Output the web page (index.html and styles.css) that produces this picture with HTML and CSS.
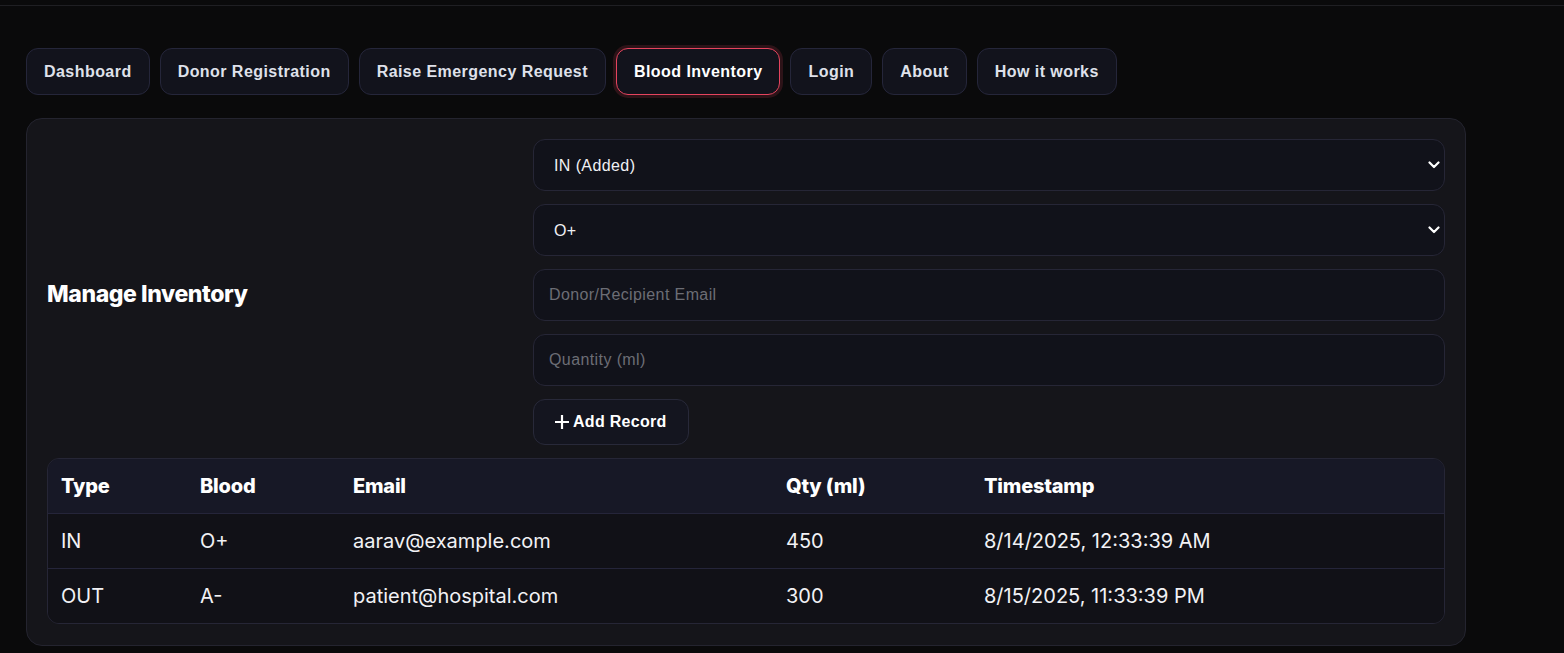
FILE: index.html
```html
<!DOCTYPE html>
<html lang="en">
<head>
<meta charset="utf-8">
<title>Blood Inventory</title>
<link rel="stylesheet" href="styles.css">
</head>
<body>
<div class="topbar"></div>
<main class="page">
  <nav class="tabs">
    <button class="tab">Dashboard</button>
    <button class="tab">Donor Registration</button>
    <button class="tab">Raise Emergency Request</button>
    <button class="tab active">Blood Inventory</button>
    <button class="tab">Login</button>
    <button class="tab">About</button>
    <button class="tab">How it works</button>
  </nav>

  <section class="card">
    <div class="manage">
      <h2 class="title">Manage Inventory</h2>
      <form class="form">
        <div class="select-wrap">
          <select class="field select">
            <option>IN (Added)</option>
            <option>OUT (Used)</option>
          </select>
          <svg class="chev" width="12" height="8" viewBox="0 0 12 8"><path d="M1.5 1.5 6 6l4.5-4.5" fill="none" stroke="#fff" stroke-width="2.2" stroke-linecap="round" stroke-linejoin="round"/></svg>
        </div>
        <div class="select-wrap">
          <select class="field select">
            <option>O+</option>
            <option>A-</option>
          </select>
          <svg class="chev" width="12" height="8" viewBox="0 0 12 8"><path d="M1.5 1.5 6 6l4.5-4.5" fill="none" stroke="#fff" stroke-width="2.2" stroke-linecap="round" stroke-linejoin="round"/></svg>
        </div>
        <input class="field input" type="text" placeholder="Donor/Recipient Email">
        <input class="field input" type="text" placeholder="Quantity (ml)">
        <div><button type="button" class="add"><svg width="14" height="14" viewBox="0 0 14 14"><path d="M7 1v12M1 7h12" stroke="#fff" stroke-width="2.2" stroke-linecap="square"/></svg>Add Record</button></div>
      </form>
    </div>

    <div class="table-wrap">
      <table class="table">
        <colgroup>
          <col class="c1"><col class="c2"><col class="c3"><col class="c4"><col class="c5">
        </colgroup>
        <thead>
          <tr><th>Type</th><th>Blood</th><th>Email</th><th>Qty (ml)</th><th>Timestamp</th></tr>
        </thead>
        <tbody>
          <tr><td>IN</td><td>O+</td><td>aarav@example.com</td><td>450</td><td>8/14/2025, 12:33:39 AM</td></tr>
          <tr><td>OUT</td><td>A-</td><td>patient@hospital.com</td><td>300</td><td>8/15/2025, 11:33:39 PM</td></tr>
        </tbody>
      </table>
    </div>
  </section>
</main>
</body>
</html>
```

FILE: styles.css
```css
* { box-sizing: border-box; }

html, body {
  margin: 0;
  background: #0a0a0b;
  color: #e8e8ee;
  font-family: "Liberation Sans", Arial, sans-serif;
}

.topbar {
  height: 6px;
  border-bottom: 1px solid #1f1f23;
}

.page {
  padding: 42px 26px 0;
}

.tabs {
  display: flex;
  gap: 10px;
}

.tab {
  height: 47px;
  padding: 0 17px;
  background: #12131c;
  border: 1px solid #25263a;
  border-radius: 12px;
  color: #dfe1ea;
  font-family: "Liberation Sans", Arial, sans-serif;
  font-weight: 700;
  font-size: 16px;
  letter-spacing: 0.45px;
}

.tab.active {
  color: #fff;
  border-color: #e5445e;
  box-shadow: 0 0 0 3px rgba(229, 68, 94, 0.16);
}

.card {
  margin-top: 23px;
  width: 1440px;
  background: #15151a;
  border: 1px solid #24242f;
  border-radius: 16px;
  padding: 20px 20px 21px;
}

.manage {
  display: grid;
  grid-template-columns: 1fr 2fr;
  column-gap: 30px;
  align-items: center;
}

.title {
  margin: 0;
  padding-top: 3px;
  font-family: Inter, "Noto Sans", sans-serif;
  font-weight: 800;
  font-size: 23px;
  color: #fff;
  letter-spacing: -0.4px;
}

.form {
  display: flex;
  flex-direction: column;
  gap: 13px;
}

.field {
  display: block;
  width: 100%;
  height: 52px;
  background: #11121a;
  border: 1px solid #262636;
  border-radius: 12px;
  color: #f0f0f4;
  font-family: "Liberation Sans", Arial, sans-serif;
  font-size: 16px;
  letter-spacing: 0.4px;
  outline: none;
}

.select-wrap {
  position: relative;
}

.select {
  appearance: none;
  -webkit-appearance: none;
  padding: 0 20px;
}

.chev {
  position: absolute;
  right: 5px;
  top: 22px;
  width: 12px;
  height: 8px;
}

.input {
  padding: 0 15px;
}

.input::placeholder {
  color: #6c6d75;
}

.add {
  display: inline-flex;
  align-items: center;
  gap: 4px;
  height: 46px;
  padding: 0 21px 0 21px;
  background: #14151f;
  border: 1px solid #282939;
  border-radius: 12px;
  color: #fff;
  font-family: "Liberation Sans", Arial, sans-serif;
  font-weight: 700;
  font-size: 16px;
  letter-spacing: 0.3px;
}

.table-wrap {
  margin-top: 13px;
  border: 1px solid #262636;
  border-radius: 12px;
  overflow: hidden;
}

.table {
  width: 100%;
  border-collapse: collapse;
  table-layout: fixed;
  font-family: Inter, "Noto Sans", sans-serif;
  font-size: 20px;
  color: #f2f2f5;
}

.c1 { width: 139px; }
.c2 { width: 153px; }
.c3 { width: 433px; }
.c4 { width: 198px; }

.table th {
  background: #171826;
  height: 54px;
  text-align: left;
  font-weight: 800;
  color: #fff;
  padding: 0 13px;
  letter-spacing: -0.2px;
}

.table td {
  height: 55px;
  padding: 0 13px;
  background: #111117;
  border-top: 1px solid #25253a;
  font-weight: 400;
}
```
